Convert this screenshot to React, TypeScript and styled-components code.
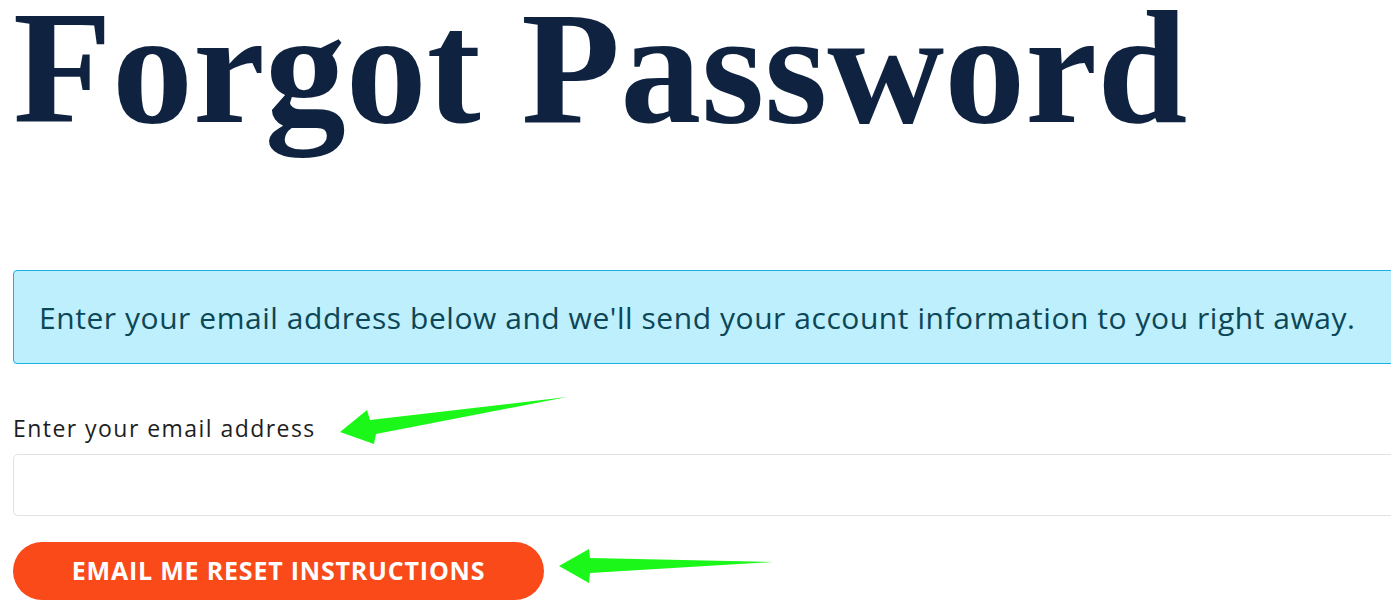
import React from "react";
import styled, { createGlobalStyle } from "styled-components";

const GlobalStyle = createGlobalStyle`
	html, body {
		margin: 0;
		padding: 0;
		background: #ffffff;
		overflow: hidden;
	}
	body {
		font-family: "Open Sans", "Noto Sans", sans-serif;
	}
`;

const Page = styled.div`
	position: relative;
	width: 1391px;
	height: 601px;
	overflow: hidden;
	padding-left: 13px;
	box-sizing: border-box;
`;

const Title = styled.h1`
	margin: 0;
	height: 270px;
	font-family: "Liberation Serif", "DejaVu Serif", serif;
	font-weight: 700;
	font-size: 162px;
	line-height: 135px;
	color: #0f2340;
	white-space: nowrap;
`;

const Alert = styled.div`
	box-sizing: border-box;
	width: 1400px;
	height: 94px;
	display: flex;
	align-items: center;
	padding: 0 25px;
	background: #bdeffd;
	border: 1px solid #1ab0e8;
	border-radius: 4px;
	color: #0d4656;
	font-size: 30px;
	letter-spacing: 0.55px;
	white-space: nowrap;
`;

const Form = styled.form`
	display: flex;
	flex-direction: column;
	align-items: flex-start;
	padding-top: 49px;
`;

const Label = styled.label`
	font-size: 23px;
	letter-spacing: 1.45px;
	color: #1e1e1e;
	line-height: 30px;
	margin-bottom: 11px;
`;

const Input = styled.input`
	box-sizing: border-box;
	width: 1400px;
	height: 62px;
	border: 1px solid #e2e2e2;
	border-radius: 5px;
	background: #fff;
	outline: none;
	font-size: 20px;
	padding: 0 16px;
`;

const Button = styled.button`
	margin-top: 26px;
	width: 531px;
	height: 58px;
	padding: 0 0 2px;
	border: none;
	border-radius: 30px;
	background: #fb4a1a;
	color: #ffffff;
	font-family: "Open Sans", "Noto Sans", sans-serif;
	font-weight: 700;
	font-size: 25px;
	letter-spacing: 0.8px;
	cursor: pointer;
`;

const Annotations = styled.svg`
	position: absolute;
	left: 0;
	top: 0;
	pointer-events: none;
`;

export default function App() {
	return (
		<>
			<GlobalStyle />
			<Page>
				<Title>Forgot Password</Title>
				<Alert>
					Enter your email address below and we'll send your account information to you right away.
				</Alert>
				<Form onSubmit={(e) => e.preventDefault()}>
					<Label htmlFor="email">Enter your email address</Label>
					<Input id="email" type="email" />
					<Button type="submit">EMAIL ME RESET INSTRUCTIONS</Button>
				</Form>
				<Annotations width="1391" height="601" viewBox="0 0 1391 601">
					<polygon
						fill="#1cf71a"
						points="340,432 367,410 370,420 567,397 376,434 374,444"
					/>
					<polygon
						fill="#1cf71a"
						points="559,566 589,549 590,558 773,562 590,573 589,583"
					/>
				</Annotations>
			</Page>
		</>
	);
}
